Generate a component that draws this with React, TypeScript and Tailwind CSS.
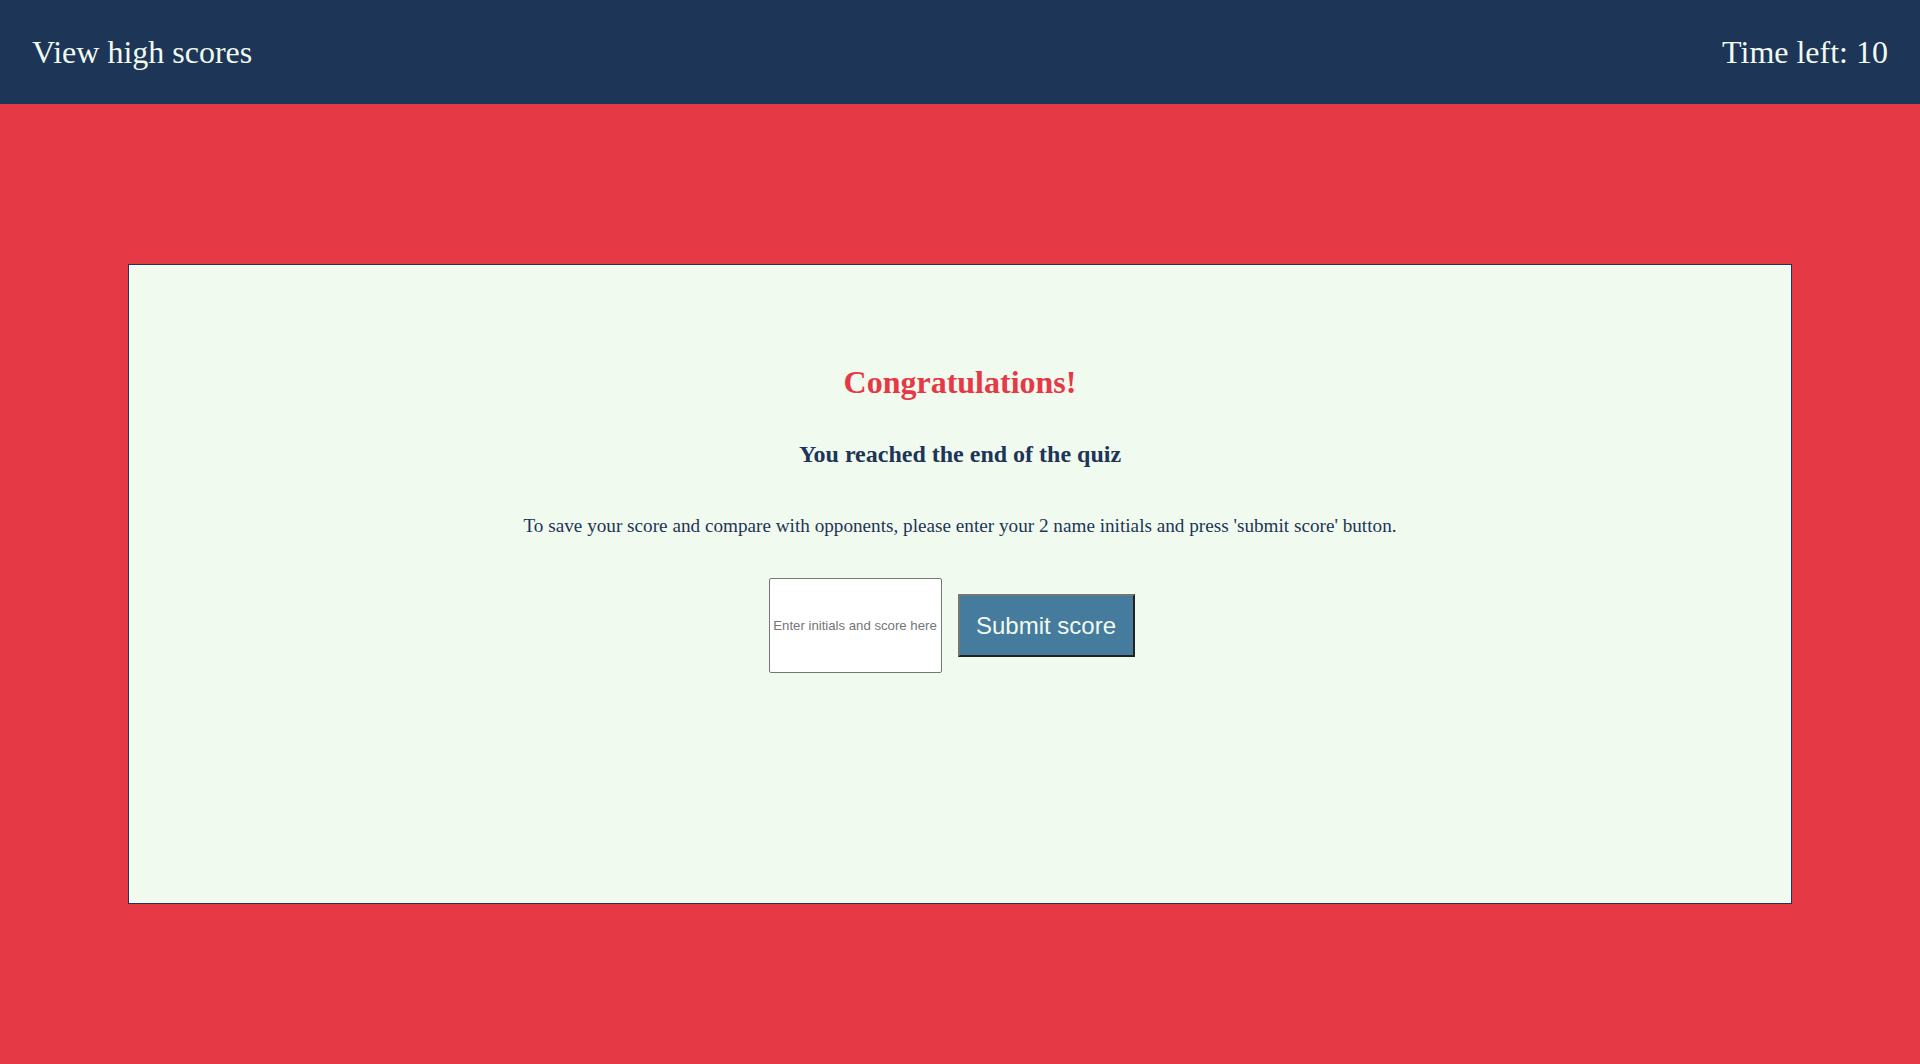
import React, { useState } from 'react';

const App: React.FC = () => {
  const [initials, setInitials] = useState('');

  return (
    <div className="min-h-screen bg-[#e63946] font-['Liberation_Serif',serif]">
      {/* Top bar */}
      <header className="h-[104px] bg-[#1d3557] px-[32px] flex items-center justify-between text-[#f1faee] text-[32px] leading-[37px]">
        <a href="#" className="block">View high scores</a>
        <div>Time left: 10</div>
      </header>

      {/* End-of-quiz card */}
      <main className="mx-[128px] mt-[160px] h-[640px] border border-[#1d3557] bg-[#f1faee] pt-[99px] flex flex-col items-center">
        <h1 className="text-[32px] leading-[37px] font-bold text-[#e63946]">Congratulations!</h1>
        <h2 className="mt-[39px] text-[24px] leading-[28px] font-bold text-[#1d3557]">You reached the end of the quiz</h2>
        <p className="mt-[47px] text-[19.2px] leading-[22px] text-[#1d3557]">
          To save your score and compare with opponents, please enter your 2 name initials and press 'submit score' button.
        </p>

        <div className="mt-[41px] pr-[17px] flex items-center gap-[16px]">
          <input
            type="text"
            value={initials}
            onChange={(e) => setInitials(e.target.value)}
            placeholder="Enter initials and score here"
            className="w-[173px] h-[95px] bg-white border border-[#767676] rounded-[2px] px-[2px] text-center text-[13.2px] font-['Liberation_Sans',Arial,sans-serif] text-[#1d3557] placeholder:text-[#757575]"
          />
          <button className="w-[177px] h-[63px] bg-[#457b9d] text-[#f1faee] text-[24px] font-['Liberation_Sans',Arial,sans-serif] border-2 border-[#767676] border-r-[#222] border-b-[#222]">
            Submit score
          </button>
        </div>
      </main>
    </div>
  );
};

export default App;
